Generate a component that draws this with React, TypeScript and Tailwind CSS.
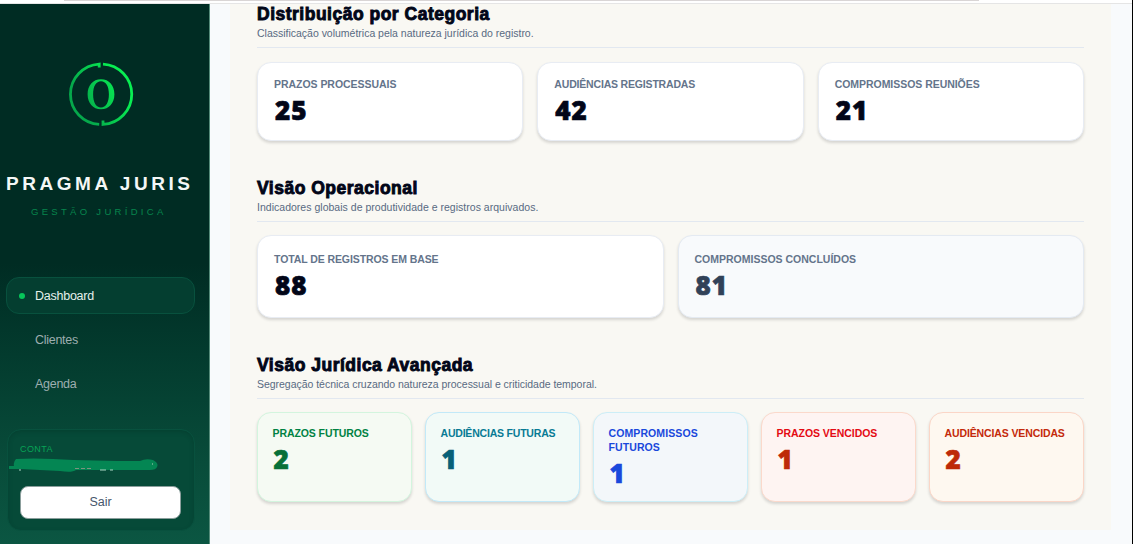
type Stat = { label: string; value: string; labelSpacing: string; card: string; labelColor: string; valueColor: string };

const neutral = { card: 'border-[#e8ecf3] bg-white', labelColor: 'text-[#64748b]', valueColor: 'text-[#020618]' };

const categories: Stat[] = [
  { label: 'PRAZOS PROCESSUAIS', value: '25', labelSpacing: 'tracking-[-0.04px]', ...neutral },
  { label: 'AUDIÊNCIAS REGISTRADAS', value: '42', labelSpacing: 'tracking-[-0.18px]', ...neutral },
  { label: 'COMPROMISSOS REUNIÕES', value: '21', labelSpacing: 'tracking-[-0.04px]', ...neutral },
];

const operational: Stat[] = [
  { label: 'TOTAL DE REGISTROS EM BASE', value: '88', labelSpacing: 'tracking-[-0.09px]', ...neutral },
  {
    label: 'COMPROMISSOS CONCLUÍDOS', value: '81', labelSpacing: 'tracking-[0px]',
    card: 'border-[#e4eaf2] bg-[#f8fafc]', labelColor: 'text-[#64748b]', valueColor: 'text-[#314158]',
  },
];

const advanced: Stat[] = [
  { label: 'PRAZOS FUTUROS', value: '2', labelSpacing: 'tracking-[-0.08px]', card: 'border-[#d3f5de] bg-[#f5faf3]', labelColor: 'text-[#008243]', valueColor: 'text-[#077038]' },
  { label: 'AUDIÊNCIAS FUTURAS', value: '1', labelSpacing: 'tracking-[-0.2px] whitespace-nowrap', card: 'border-[#c2e9f8] bg-[#f2faf7]', labelColor: 'text-[#087a94]', valueColor: 'text-[#086078]' },
  { label: 'COMPROMISSOS FUTUROS', value: '1', labelSpacing: 'tracking-[0.1px]', card: 'border-[#cceef7] bg-[#f3f7fa]', labelColor: 'text-[#1948dc]', valueColor: 'text-[#1948dc]' },
  { label: 'PRAZOS VENCIDOS', value: '1', labelSpacing: 'tracking-[-0.05px]', card: 'border-[#fbd9cb] bg-[#fef4f2]', labelColor: 'text-[#e40a14]', valueColor: 'text-[#be2a08]' },
  { label: 'AUDIÊNCIAS VENCIDAS', value: '2', labelSpacing: 'tracking-[-0.12px] whitespace-nowrap', card: 'border-[#fbd6c7] bg-[#fef8f0]', labelColor: 'text-[#c42a0a]', valueColor: 'text-[#be2a08]' },
];

function SectionHeader({ title, text, textSpacing }: { title: string; text: string; textSpacing: string }) {
  return (
    <header className="h-11 shrink-0 border-b border-[#e2e8f0]">
      <h2 className="h-5 whitespace-nowrap text-[17.5px] font-bold leading-5 tracking-[0.5px] text-[#020618] [-webkit-text-stroke:0.9px_#020618]">{title}</h2>
      <p className={`mt-0.5 whitespace-nowrap text-[10.5px] leading-[14px] text-[#586a82] ${textSpacing}`}>{text}</p>
    </header>
  );
}

function StatCard({ stat, padding }: { stat: Stat; padding: string }) {
  return (
    <article className={`rounded-[14px] border shadow-[0_2px_3px_rgba(0,0,0,0.14)] ${stat.card} ${padding}`}>
      <h3 className={`text-[10.5px] font-bold leading-[14px] ${stat.labelSpacing} ${stat.labelColor}`}>{stat.label}</h3>
      <p className={`mt-1 pl-px font-['Open_Sans','Liberation_Sans',sans-serif] text-[26px] font-extrabold leading-[30px] tracking-[1px] [-webkit-text-stroke:0.7px_currentColor] ${stat.valueColor}`}>{stat.value}</p>
    </article>
  );
}

function Logo() {
  return (
    <svg className="h-[66px] w-[66px]" viewBox="0 0 66 66" fill="none">
      <defs>
        <linearGradient id="ring" x1="0" y1="50" x2="66" y2="16" gradientUnits="userSpaceOnUse">
          <stop offset="0.2" stopColor="#05a84b" />
          <stop offset="0.8" stopColor="#08ee52" />
        </linearGradient>
      </defs>
      <g stroke="url(#ring)" strokeWidth="2.8">
        <path d="M31.2 6.500V3.100A30.500 30.200 0 0 0 31.2 63.400" />
        <path d="M35 3.100A30.500 30.200 0 0 1 35 63.400V59.500" />
      </g>
      <path fill="url(#ring)" fillRule="evenodd" d="M33 18.300c-8.200 0-13.400 6.200-13.400 15S24.800 48.300 33 48.300s13.400-6.200 13.400-15S41.200 18.300 33 18.300Zm0 1.900c4.900 0 7.900 4.800 7.900 13.100s-3 13.100-7.900 13.100-7.900-4.800-7.900-13.100 3-13.100 7.900-13.100Z" />
    </svg>
  );
}

function Sidebar() {
  return (
    <aside className="flex w-[210px] shrink-0 flex-col border-r border-[#548b79] bg-[linear-gradient(180deg,#002c23_0%,#002c23_48%,#033b2e_65%,#084c3a_85%,#0b5642_100%)]">
      <div className="flex flex-col items-center">
        <div className="mt-[57px] -ml-2"><Logo /></div>
        <div className="mt-[45px] w-full whitespace-nowrap pl-1.5 text-[19px] font-bold leading-6 tracking-[3.55px] text-[#f4f7f6]">PRAGMA JURIS</div>
        <div className="mt-[9px] w-full whitespace-nowrap pl-[31px] text-[9.5px] leading-[14px] tracking-[3.3px] text-[#07854d]">GESTÃO JURÍDICA</div>
      </div>
      <nav className="mt-[58px] ml-1.5 flex w-[189px] flex-col gap-[7px] text-[12.5px] text-[#9eaeb0]">
        <a className="flex h-[37px] items-center rounded-[13px] border border-[#08513e] bg-[#043e30] pl-3 pt-px tracking-[-0.25px] text-[#e5f1ec]">
          <span className="mr-2.5 h-1.5 w-1.5 rounded-full bg-[#06c65a]" />Dashboard
        </a>
        <a className="flex h-[37px] items-center pl-[29px] pt-0.5 tracking-[-0.28px]">Clientes</a>
        <a className="flex h-[37px] items-center pl-[29px] pt-0.5 tracking-[-0.28px]">Agenda</a>
      </nav>
      <section className="mt-[27px] ml-[7px] flex h-[102px] w-[188px] flex-col rounded-[14px] border border-[#08513e] bg-[#064a38] shadow-[inset_0_2px_4px_rgba(0,40,30,0.25)]">
        <div className="mt-3 pl-3 text-[9px] leading-[14px] tracking-[0.4px] text-[#07a356]">CONTA</div>
        <svg className="mt-[2px] h-[14px] w-[152px] shrink-0" viewBox="0 0 152 14" fill="none">
          <path d="M8 1Q25 0 45 1Q85 3 132 3Q138 0 145 2Q151 5 149 9Q148 12 142 12L68 12Q64 15 52 13Q31 12 13 11L1 11V8H6Q5 4 8 1Z" fill="#048653" />
          <path d="M67 10.500h4m2 0h4m2 0h4" stroke="#7c947f" />
          <path d="M92 12h6m4 0h3m-94 0h2" stroke="#a9d5c3" />
          <path d="M144 6h1" stroke="#b5cdbb" />
        </svg>
        <button className="mt-[14px] ml-3 flex h-[33px] w-[161px] shrink-0 items-center justify-center rounded-lg border border-[#8b9e9c] bg-white text-[12.5px] text-[#46566c]">Sair</button>
      </section>
    </aside>
  );
}

export default function App() {
  return (
    <div className="flex h-[544px] w-[1133px] overflow-hidden border-r border-black bg-[#f8fafc] font-['Liberation_Sans',sans-serif]">
      <div className="flex w-full flex-col">
        <div className="h-1 shrink-0 border-b border-[#e5e5e5] bg-white">
          <div className="ml-16 h-px w-[915px] bg-[#d9d5d5]" />
        </div>
        <div className="flex min-h-0 grow">
          <Sidebar />
          <main className="ml-5 flex h-[526px] w-[881px] flex-col bg-[#f9f8f3] px-[27px]">
            <SectionHeader title="Distribuição por Categoria" text="Classificação volumétrica pela natureza jurídica do registro." textSpacing="tracking-[-0.01px]" />
            <div className="mt-3.5 grid h-[79px] shrink-0 grid-cols-3 gap-3.5">
              {categories.map((s) => <StatCard key={s.label} stat={s} padding="px-4 pt-3.5" />)}
            </div>
            <div className="mt-[37px]">
              <SectionHeader title="Visão Operacional" text="Indicadores globais de produtividade e registros arquivados." textSpacing="tracking-[0.02px]" />
            </div>
            <div className="mt-[13px] grid h-[83px] shrink-0 grid-cols-2 gap-3.5">
              {operational.map((s) => <StatCard key={s.label} stat={s} padding="px-4 pt-4" />)}
            </div>
            <div className="mt-[37px]">
              <SectionHeader title="Visão Jurídica Avançada" text="Segregação técnica cruzando natureza processual e criticidade temporal." textSpacing="tracking-[-0.03px]" />
            </div>
            <div className="mt-[13px] grid h-[90px] shrink-0 grid-cols-5 gap-[13px]">
              {advanced.map((s) => <StatCard key={s.label} stat={s} padding="pl-[14.5px] pr-2 pt-[13px]" />)}
            </div>
          </main>
        </div>
      </div>
    </div>
  );
}
